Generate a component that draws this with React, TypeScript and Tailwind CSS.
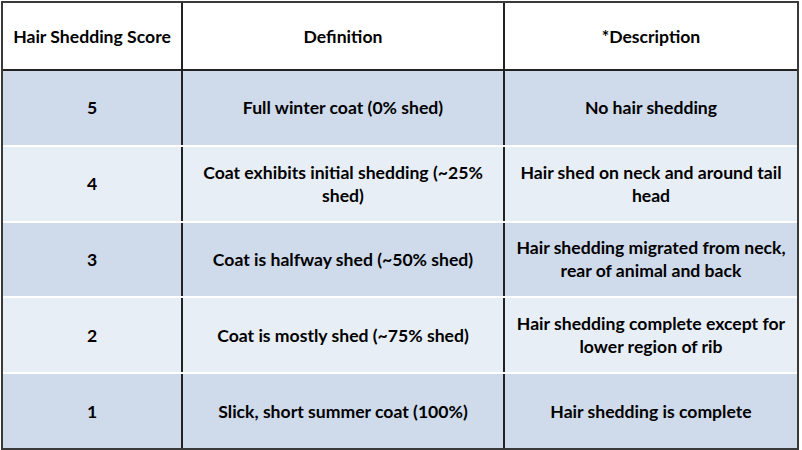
import React from "react";

const rows = [
  { score: "5", def: "Full winter coat (0% shed)", desc: "No hair shedding" },
  { score: "4", def: "Coat exhibits initial shedding (~25% shed)", desc: "Hair shed on neck and around tail head" },
  { score: "3", def: "Coat is halfway shed (~50% shed)", desc: "Hair shedding migrated from neck, rear of animal and back" },
  { score: "2", def: "Coat is mostly shed (~75% shed)", desc: "Hair shedding complete except for lower region of rib" },
  { score: "1", def: "Slick, short summer coat (100%)", desc: "Hair shedding is complete" },
];

export default function App() {
  return (
    <div className="w-[802px] h-[450px] bg-white pl-[1px] pt-[1px] font-['Lato',sans-serif] font-bold text-[17.6px] leading-[23px] text-black">
      <div className="w-[798px] h-[449px] border-2 border-[#3a3a3a] flex flex-col bg-white">
        <div className="h-[68px] shrink-0 grid grid-cols-[180px_322px_292px] border-b-2 border-[#222]">
          <div className="border-r-2 border-[#222] flex items-center justify-center text-center px-[4px] whitespace-nowrap">Hair Shedding Score</div>
          <div className="border-r-2 border-[#222] flex items-center justify-center text-center px-[8px]">Definition</div>
          <div className="flex items-center justify-center text-center px-[8px]">*Description</div>
        </div>
        <div className="flex-1 flex flex-col gap-[2px] bg-white">
          {rows.map((r, i) => (
            <div
              key={r.score}
              className={
                "flex-1 grid grid-cols-[180px_322px_292px] " +
                (i % 2 === 0 ? "bg-[#cfdbeb]" : "bg-[#e8eef6]")
              }
            >
              <div className="border-r-2 border-[#222] flex items-center justify-center text-center px-[6px]">{r.score}</div>
              <div className="border-r-2 border-[#222] flex items-center justify-center text-center px-[12px]">{r.def}</div>
              <div className="flex items-center justify-center text-center px-[6px]">{r.desc}</div>
            </div>
          ))}
        </div>
      </div>
    </div>
  );
}
